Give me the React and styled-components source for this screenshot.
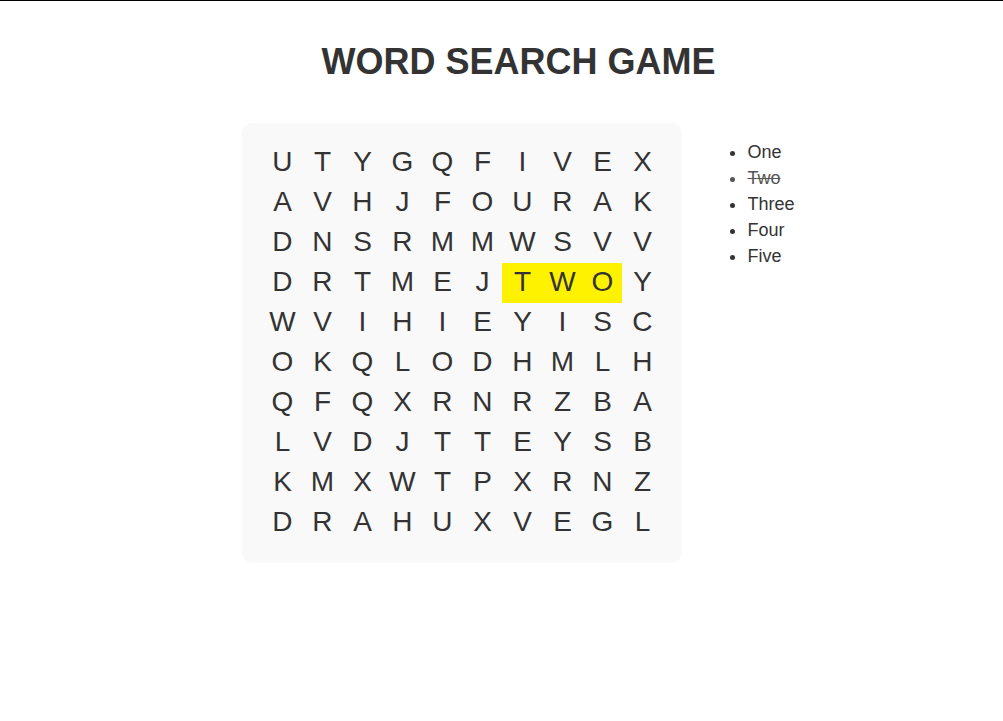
import React from "react";
import styled, { createGlobalStyle } from "styled-components";

const GlobalStyle = createGlobalStyle`
  html, body {
    margin: 0;
    padding: 0;
    background: #ffffff;
  }
  body {
    border-top: 1px solid #000;
    font-family: "Liberation Sans", Arial, Helvetica, sans-serif;
    color: #333;
  }
`;

const GRID = [
  "UTYGQFIVEX",
  "AVHJFOURAK",
  "DNSRMMWSVV",
  "DRTMEJTWOY",
  "WVIHIEYISC",
  "OKQLODHMLH",
  "QFQXRNRZBA",
  "LVDJTTEYSB",
  "KMXWTPXRNZ",
  "DRAHUXVEGL",
];

const WORDS = [
  { text: "One", found: false },
  { text: "Two", found: true },
  { text: "Three", found: false },
  { text: "Four", found: false },
  { text: "Five", found: false },
];

// cells belonging to words already found
const FOUND = new Set(["3-6", "3-7", "3-8"]);

const Page = styled.div`
  padding-left: 34px;
  display: flex;
  flex-direction: column;
  align-items: center;
`;

const Title = styled.h1`
  margin: 40px 0 0;
  font-size: 36px;
  line-height: 1.15;
  font-weight: bold;
  color: #333;
  text-align: center;
`;

const GameRow = styled.div`
  margin-top: 41px;
  display: flex;
  align-items: flex-start;
  gap: 40px;
`;

const Board = styled.div`
  padding: 20px;
  background: #f9f9f9;
  border-radius: 10px;
  display: grid;
  grid-template-columns: repeat(10, 40px);
  grid-auto-rows: 40px;
`;

const Cell = styled.div`
  display: flex;
  align-items: center;
  justify-content: center;
  padding-bottom: 2px;
  box-sizing: border-box;
  font-size: 28px;
  color: #333;
  background: ${(p) => (p.$found ? "#fff200" : "transparent")};
  user-select: none;
`;

const WordList = styled.ul`
  margin: 16px 0 0;
  padding-left: 25px;
  list-style: disc;
  font-size: 18px;
  line-height: 26px;
  color: #333;
`;

const Word = styled.li`
  text-decoration: ${(p) => (p.$found ? "line-through" : "none")};
  color: ${(p) => (p.$found ? "#555" : "#333")};
`;

export default function App() {
  return (
    <>
      <GlobalStyle />
      <Page>
        <Title>WORD SEARCH GAME</Title>
        <GameRow>
          <Board>
            {GRID.map((row, r) =>
              row.split("").map((ch, c) => (
                <Cell key={`${r}-${c}`} $found={FOUND.has(`${r}-${c}`)}>
                  {ch}
                </Cell>
              ))
            )}
          </Board>
          <WordList>
            {WORDS.map((w) => (
              <Word key={w.text} $found={w.found}>
                {w.text}
              </Word>
            ))}
          </WordList>
        </GameRow>
      </Page>
    </>
  );
}
